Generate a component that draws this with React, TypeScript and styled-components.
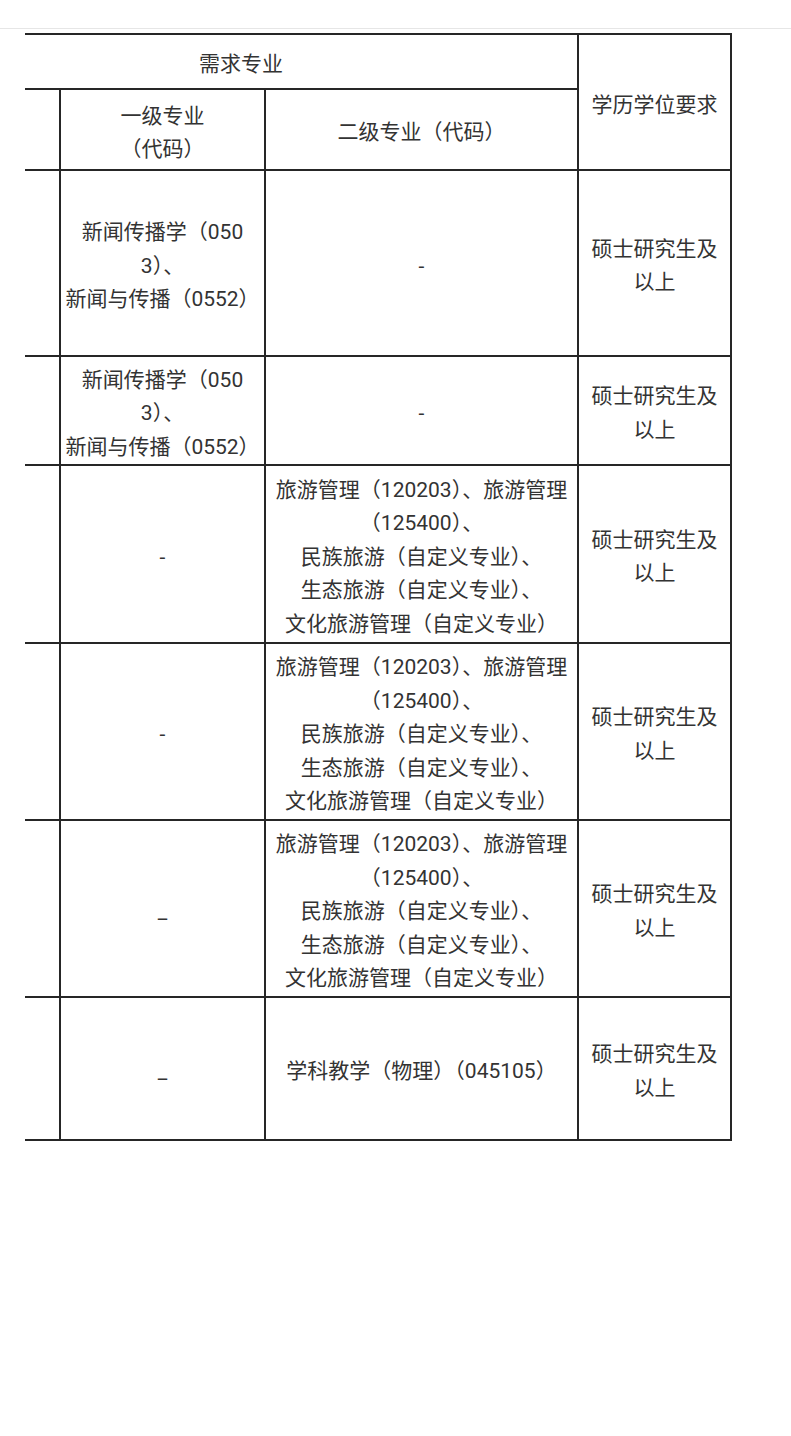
import styled, { createGlobalStyle } from 'styled-components';

const GlobalStyle = createGlobalStyle`
  html, body {
    margin: 0;
    padding: 0;
    background: #fff;
  }
  body {
    font-family: 'Roboto', 'Noto Sans CJK SC', sans-serif;
    color: #333;
  }
`;

const TopBar = styled.div`
  height: 28px;
  border-bottom: 1px solid #e6e6e6;
`;

const Scroller = styled.div`
  margin: 4px 0 0 25px;
  width: 712px;
  overflow: hidden;
`;

const Table = styled.table`
  margin-left: -122px;
  width: 827px;
  table-layout: fixed;
  border-collapse: collapse;
  font-size: 21px;
  line-height: 33.5px;
`;

const Col = styled.col<{ $w: number }>`
  width: ${({ $w }) => $w}px;
`;

const Row = styled.tr<{ $h: number }>`
  height: ${({ $h }) => $h}px;
`;

const HeadCell = styled.th`
  border: 2px solid #262626;
  padding: 7px 4px 0;
  font-weight: 400;
  text-align: center;
  vertical-align: middle;
`;

const Cell = styled.td`
  border: 2px solid #262626;
  padding: 6.5px 4px 0;
  text-align: center;
  vertical-align: middle;
  word-break: break-all;
`;

interface Entry {
  h: number;
  first: string[];
  second: string[];
}

const news = ['新闻传播学（0503）、', '新闻与传播（0552）'];
const tourism = [
  '旅游管理（120203）、旅游管理（125400）、',
  '民族旅游（自定义专业）、',
  '生态旅游（自定义专业）、',
  '文化旅游管理（自定义专业）',
];

const rows: Entry[] = [
  { h: 186, first: news, second: ['-'] },
  { h: 109, first: news, second: ['-'] },
  { h: 178, first: ['-'], second: tourism },
  { h: 177, first: ['-'], second: tourism },
  { h: 177, first: ['_'], second: tourism },
  { h: 143, first: ['_'], second: ['学科教学（物理）（045105）'] },
];

function Lines({ items }: { items: string[] }) {
  return (
    <>
      {items.map((t, i) => (
        <span key={i}>
          {i > 0 && <br />}
          {t}
        </span>
      ))}
    </>
  );
}

export default function App() {
  return (
    <>
      <GlobalStyle />
      <TopBar />
      <Scroller>
        <Table>
          <colgroup>
            <Col $w={156} />
            <Col $w={205} />
            <Col $w={313} />
            <Col $w={153} />
          </colgroup>
          <thead>
            <Row $h={55}>
              <HeadCell colSpan={3}>需求专业</HeadCell>
              <HeadCell rowSpan={2}>学历学位要求</HeadCell>
            </Row>
            <Row $h={81}>
              <HeadCell />
              <HeadCell>
                一级专业
                <br />
                （代码）
              </HeadCell>
              <HeadCell>二级专业（代码）</HeadCell>
            </Row>
          </thead>
          <tbody>
            {rows.map((r, i) => (
              <Row key={i} $h={r.h}>
                <Cell />
                <Cell>
                  <Lines items={r.first} />
                </Cell>
                <Cell>
                  <Lines items={r.second} />
                </Cell>
                <Cell>硕士研究生及以上</Cell>
              </Row>
            ))}
          </tbody>
        </Table>
      </Scroller>
    </>
  );
}
